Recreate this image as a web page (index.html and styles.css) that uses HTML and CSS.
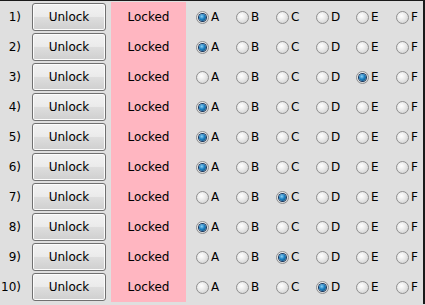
FILE: index.html
```html
<!DOCTYPE html>
<html>
<head>
    <meta charset="UTF-8">
    <title>Locks</title>
    <link rel="stylesheet" href="styles.css">
</head>
<body>
    <div class="panel" id="panel"></div>

    <script>
        const picks = ['A', 'A', 'E', 'A', 'A', 'A', 'C', 'A', 'C', 'D'];
        const letters = ['A', 'B', 'C', 'D', 'E', 'F'];
        const panel = document.getElementById('panel');

        picks.forEach(function (pick, i) {
            const row = document.createElement('div');
            row.className = 'row';

            let html = '<div class="num">' + (i + 1) + ')</div>';
            html += '<div class="btn">Unlock</div>';
            html += '<div class="status">Locked</div>';
            html += '<div class="choices">';
            letters.forEach(function (l) {
                const on = l === pick ? ' on' : '';
                html += '<div class="opt"><span class="radio' + on + '"></span>' + l + '</div>';
            });
            html += '</div>';

            row.innerHTML = html;
            panel.appendChild(row);
        });
    </script>
</body>
</html>
```

FILE: styles.css
```css
body {
    margin: 0;
    background: #dfdfdf;
    font-family: "DejaVu Sans", "Liberation Sans", sans-serif;
    font-size: 12px;
    color: #000;
}
.panel {
    border-top: 1px solid #1a1a1a;
    border-right: 2px solid #1a1a1a;
    height: 304px;
    box-sizing: border-box;
    padding-top: 1px;
    overflow: hidden;
}
.row {
    display: flex;
    align-items: center;
    height: 30px;
}
.row > div {
    flex: none;
}
.num {
    width: 21px;
    text-align: right;
}
.btn {
    margin-left: 11px;
    width: 74px;
    height: 28px;
    box-sizing: border-box;
    border: 1px solid #707070;
    border-radius: 3px;
    background: linear-gradient(#f2f2f2 0%, #ebebeb 48%, #dddddd 52%, #cfcfcf 100%);
    box-shadow: inset 0 0 0 1px #fcfcfc;
    display: flex;
    align-items: center;
    justify-content: center;
}
.status {
    margin-left: 5px;
    width: 75px;
    align-self: stretch;
    background: #ffb6c1;
    display: flex;
    align-items: center;
    justify-content: center;
}
.choices {
    display: flex;
    margin-left: 10px;
}
.opt {
    width: 40px;
    display: flex;
    align-items: center;
}
.opt:last-child {
    width: auto;
}
.radio {
    width: 13px;
    height: 13px;
    box-sizing: border-box;
    border-radius: 50%;
    border: 1px solid #8f8f8f;
    background: radial-gradient(circle at 40% 35%, #ffffff 0%, #ececec 40%, #c8c8c8 100%);
    margin-right: 2px;
    display: flex;
    align-items: center;
    justify-content: center;
}
.radio.on::after {
    content: "";
    width: 7px;
    height: 7px;
    border-radius: 50%;
    background: radial-gradient(circle at 40% 35%, #8fd0f5 0%, #1a7fc0 45%, #0c3f6e 100%);
    box-shadow: 0 0 0 1px #17345a;
}
```
